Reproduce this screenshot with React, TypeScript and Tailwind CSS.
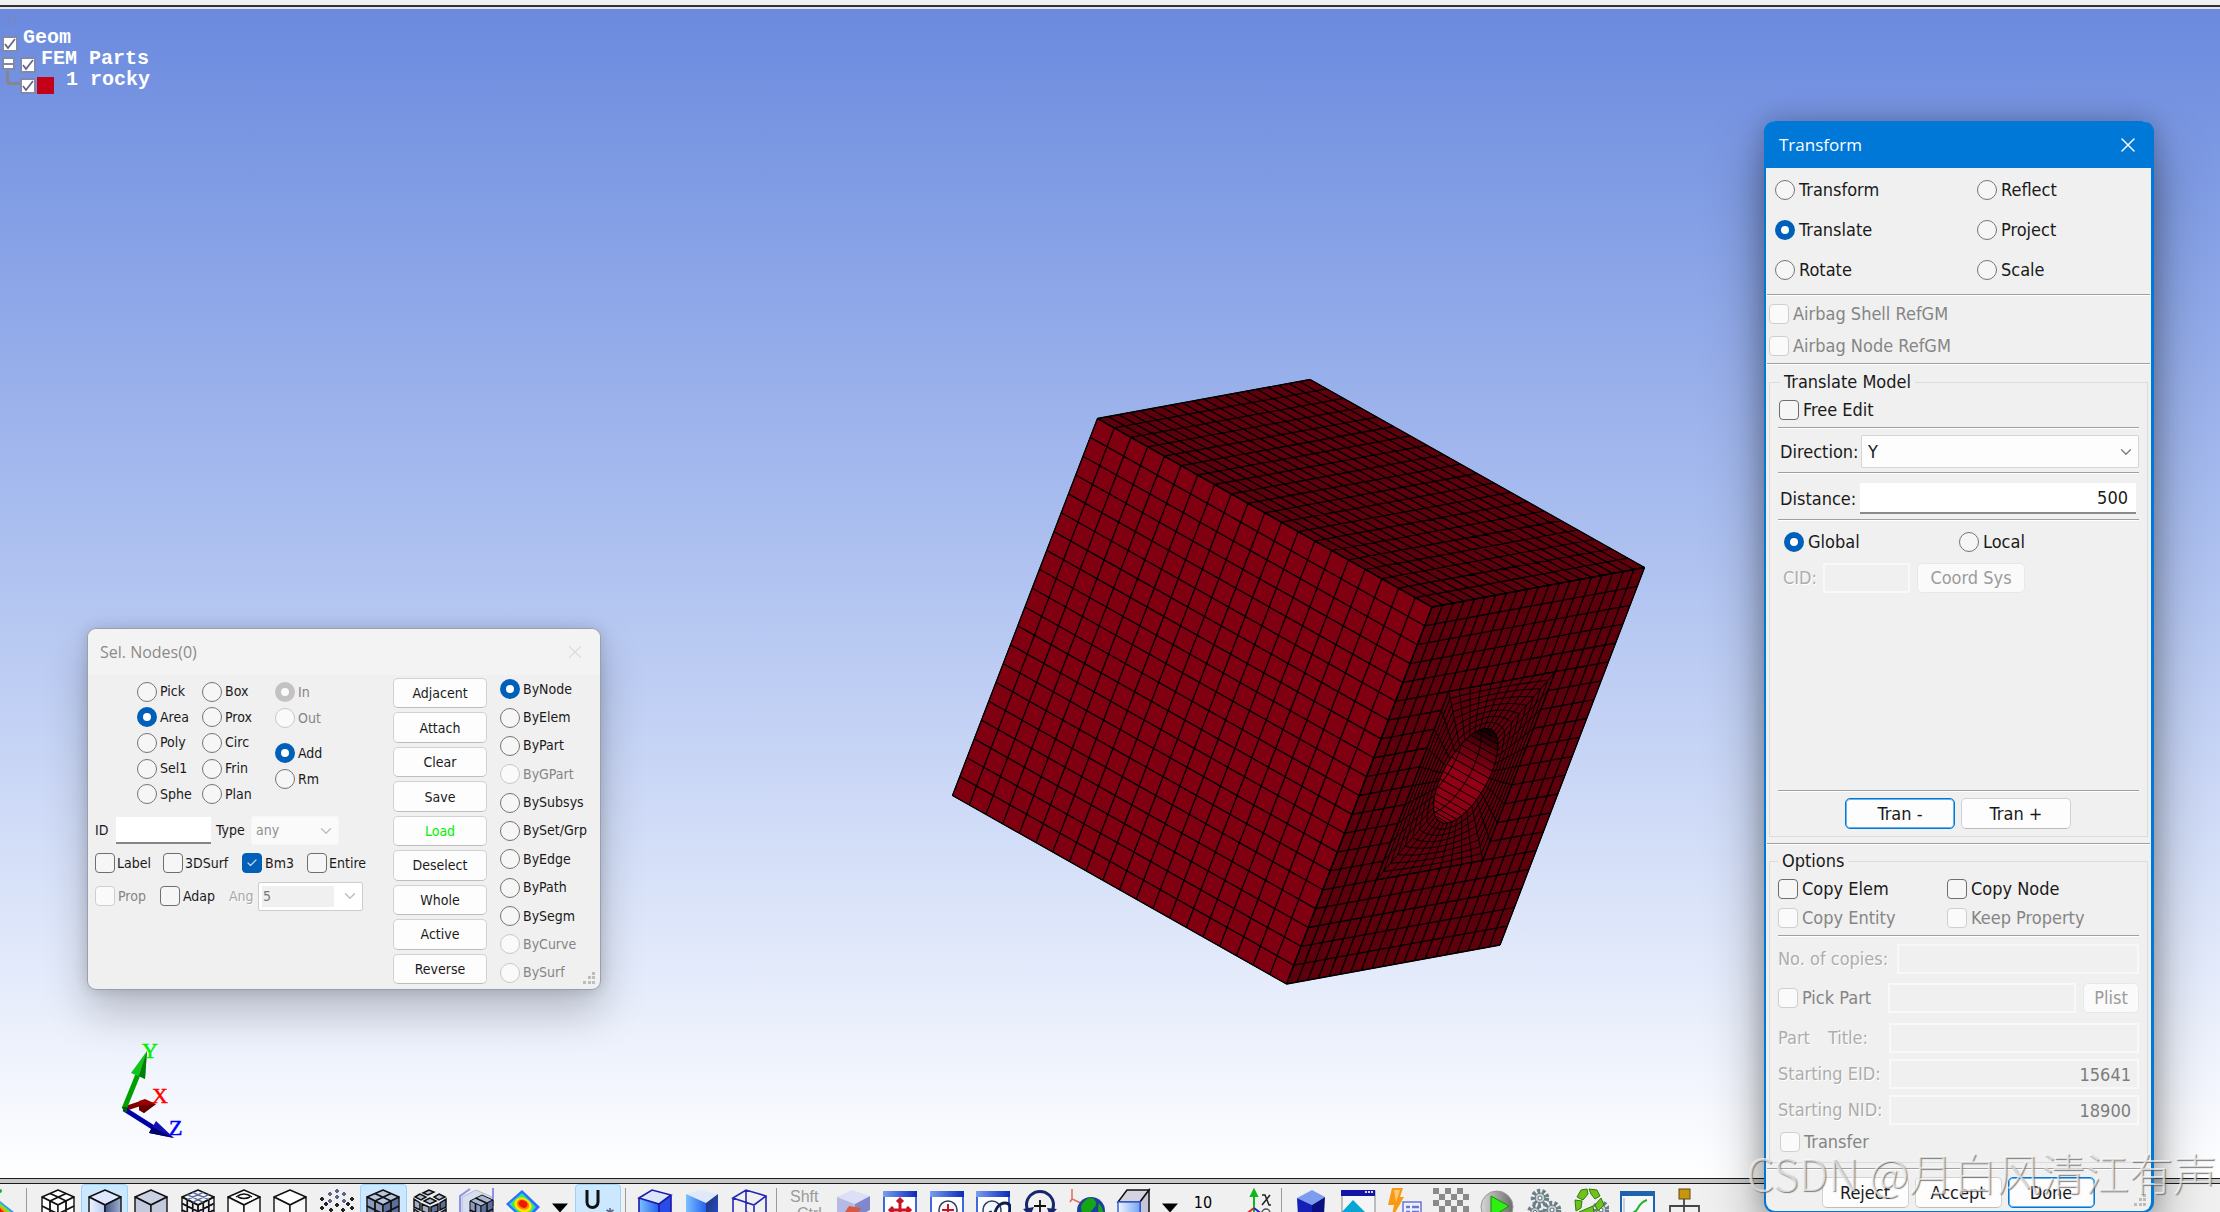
import React from "react";
import { Check, ChevronDown, ChevronsRight, X } from "lucide-react";
import clsx from "clsx";

type Pt = [number, number];

/* ---------- form primitives ---------- */

function Radio({ name, label, checked, disabled, gap = "gap-1" }: { name: string; label: string; checked?: boolean; disabled?: boolean; gap?: string }) {
  return (
    <label className={clsx("flex items-center whitespace-nowrap", gap, disabled && "text-[#858585]")}>
      <input
        type="radio"
        name={name}
        defaultChecked={checked}
        disabled={disabled}
        className="size-5 shrink-0 appearance-none rounded-full border border-[#757575] bg-[#f6f6f6] checked:border-[6px] checked:border-[#005fb8] checked:bg-white disabled:border-[#c8c8c8] disabled:bg-[#fafafa] disabled:checked:border-[#c2c2c2]"
      />
      <span>{label}</span>
    </label>
  );
}

function CheckBox({ label, checked, disabled, className }: { label: string; checked?: boolean; disabled?: boolean; className?: string }) {
  return (
    <label className={clsx("flex items-center whitespace-nowrap", disabled && "text-[#858585]", className)}>
      <span className="grid shrink-0 place-items-center">
        <input
          type="checkbox"
          defaultChecked={checked}
          disabled={disabled}
          className="peer col-start-1 row-start-1 size-5 appearance-none rounded-[4px] border border-[#6e6e6e] bg-[#f6f6f6] checked:border-[#005fb8] checked:bg-[#005fb8] disabled:border-[#cfcfcf] disabled:bg-[#fafafa]"
        />
        <Check className="pointer-events-none col-start-1 row-start-1 hidden size-3 text-[#bcd6ee] peer-checked:block" strokeWidth={2.5} />
      </span>
      <span>{label}</span>
    </label>
  );
}

function PushButton({ children, className, disabled, focus }: { children: React.ReactNode; className?: string; disabled?: boolean; focus?: boolean }) {
  return (
    <button
      type="button"
      disabled={disabled}
      className={clsx(
        "rounded-[5px] border",
        focus ? "border-[#0078d7] bg-[#fdfdfd] shadow-[0_0_0_1px_#6db3ea_inset]" : disabled ? "border-[#e8e8e8] bg-[#fafafa] text-[#9b9b9b]" : "border-[#d2d2d2] border-b-[#bdbdbd] bg-[#fdfdfd]",
        className,
      )}
    >
      {children}
    </button>
  );
}

function Select({ label, value, disabled, className, inner }: { label: string; value: string; disabled?: boolean; className?: string; inner?: string }) {
  return (
    <span className={clsx("grid items-center", className)}>
      <select aria-label={label} disabled={disabled} defaultValue={value} className={clsx("col-start-1 row-start-1 h-full w-full appearance-none rounded-[2px] border pr-7 opacity-100 outline-none", inner)}>
        <option>{value}</option>
      </select>
      <ChevronDown className={clsx("pointer-events-none col-start-1 row-start-1 mr-1 size-[18px] justify-self-end", disabled ? "text-[#bdbdbd]" : "text-[#7d7d7d]")} strokeWidth={1.8} />
    </span>
  );
}

function Rule({ className }: { className?: string }) {
  return <div className={clsx("h-[2px] border-t border-b border-t-[#a0a0a0] border-b-white", className)} />;
}

function Grip() {
  return (
    <svg className="pointer-events-none absolute right-1 bottom-1 size-[14px]" viewBox="0 0 14 14" fill="#bdbdbd">
      {[[10, 1], [10, 5], [10, 10], [6, 5], [6, 10], [1, 10]].map(([x, y]) => (
        <rect key={`${x}-${y}`} x={x} y={y} width="3" height="3" />
      ))}
    </svg>
  );
}

/* ---------- model tree ---------- */

function TreeCheck({ label }: { label: string }) {
  return (
    <span className="grid place-items-center self-end">
      <input type="checkbox" aria-label={label} defaultChecked className="col-start-1 row-start-1 size-4 appearance-none border-2 border-[#8088ab] bg-white" />
      <svg viewBox="0 0 16 16" className="pointer-events-none col-start-1 row-start-1 size-4" fill="none" stroke="#66668a" strokeWidth="1.8">
        <path d="M3 8l3 4 7-9" />
      </svg>
    </span>
  );
}

function ModelTree() {
  return (
    <div className="absolute top-0 left-0 font-['Liberation_Mono'] text-[20px] font-bold text-white">
      <ChevronsRight className="size-[22px] text-[#7787c6]" strokeWidth={1.8} />
      <div className="flex h-[21px] pl-[2px]">
        <TreeCheck label="Geom" />
        <span className="ml-[5px] leading-[14px]">Geom</span>
      </div>
      <div className="flex h-[21px] items-end pl-[2px]">
        <button type="button" aria-label="Collapse" className="mb-[3px] flex size-[13px] items-center border-2 border-[#8088ab] bg-white">
          <span className="h-[2px] w-full bg-[#8088ab]" />
        </button>
        <span className="ml-[5px] flex">
          <TreeCheck label="FEM Parts" />
        </span>
        <span className="ml-[5px] self-start leading-[14px]">FEM Parts</span>
      </div>
      <div className="flex h-[21px] items-end">
        <span className="mb-[9px] ml-[6px] h-[14px] w-[14px] rounded-bl border-b-[3px] border-l-[3px] border-[#85878d]" />
        <TreeCheck label="1 rocky" />
        <span className="ml-[1px] size-[17px] bg-[#c50019]" />
        <span className="ml-[12px] self-start leading-[14px]">1 rocky</span>
      </div>
    </div>
  );
}

/* ---------- finite element block ---------- */

const A: Pt = [145.5, 39.5];
const B: Pt = [358, 0.5];
const C: Pt = [692.5, 188.5];
const D: Pt = [480, 228];
const E: Pt = [0.5, 416.5];
const F: Pt = [334.5, 605];
const G: Pt = [548, 566];

const mix = (p: Pt, q: Pt, t: number): Pt => [p[0] + (q[0] - p[0]) * t, p[1] + (q[1] - p[1]) * t];
const quad = (p: Pt, q: Pt, r: Pt, s: Pt, u: number, v: number): Pt => mix(mix(p, q, u), mix(s, r, u), v);
const poly = (pts: Pt[]) => pts.map((p) => p[0].toFixed(1) + "," + p[1].toFixed(1)).join(" ");
const seg = (p: Pt, q: Pt) => `M${p[0].toFixed(1)} ${p[1].toFixed(1)}L${q[0].toFixed(1)} ${q[1].toFixed(1)}`;

function gridPath(p: Pt, q: Pt, r: Pt, s: Pt, n: number) {
  let d = "";
  for (let i = 0; i <= n; i++) {
    const t = i / n;
    d += seg(mix(p, q, t), mix(s, r, t)) + seg(mix(p, s, t), mix(q, r, t));
  }
  return d;
}

function squareEdge(i: number): Pt {
  const side = Math.floor(i / 10) % 4;
  const t = (i % 10) / 10;
  if (side === 0) return [0.25 + t / 2, 0.25];
  if (side === 1) return [0.75, 0.25 + t / 2];
  if (side === 2) return [0.75 - t / 2, 0.75];
  return [0.25, 0.75 - t / 2];
}

function circleEdge(i: number): Pt {
  const a = ((i / 40) * 360 - 135) * (Math.PI / 180);
  return [0.5 + 0.125 * Math.cos(a), 0.5 + 0.125 * Math.sin(a)];
}

const face = (p: Pt): Pt => quad(D, C, G, F, p[0], p[1]);

function BlockMesh() {
  let front = "";
  for (let i = 0; i <= 20; i++) {
    const t = i / 20;
    if (i > 5 && i < 15) {
      front += seg(face([t, 0]), face([t, 0.25])) + seg(face([t, 0.75]), face([t, 1]));
      front += seg(face([0, t]), face([0.25, t])) + seg(face([0.75, t]), face([1, t]));
    } else {
      front += seg(face([t, 0]), face([t, 1])) + seg(face([0, t]), face([1, t]));
    }
  }
  const idx = Array.from({ length: 40 }, (_, i) => i);
  let spokes = "";
  idx.forEach((i) => {
    spokes += seg(face(squareEdge(i)), face(circleEdge(i)));
  });
  const rings = [0, 1, 2, 3, 4, 5, 6, 7, 8].map((k) => poly(idx.map((i) => face(mix(circleEdge(i), squareEdge(i), k / 8)))));
  const hole = idx.map((i) => face(circleEdge(i)));
  const step: Pt = [(A[0] - D[0]) / 20, (A[1] - D[1]) / 20];
  let bore = "";
  hole.forEach((p) => {
    bore += seg(p, [p[0] + step[0] * 6, p[1] + step[1] * 6]);
  });
  return (
    <svg viewBox="0 0 694 606" className="absolute top-[370px] left-[952px] h-[606px] w-[694px]" stroke="#000" strokeWidth="1">
      <defs>
        <clipPath id="bore">
          <polygon points={poly(hole)} />
        </clipPath>
        <linearGradient id="wall" x1="0.7" y1="0" x2="0.4" y2="1">
          <stop offset="0" stopColor="#1c0004" />
          <stop offset="0.18" stopColor="#5c000d" />
          <stop offset="0.5" stopColor="#920016" />
          <stop offset="1" stopColor="#8c0014" />
        </linearGradient>
      </defs>
      <polygon points={poly([A, B, C, D])} fill="#5e000c" />
      <polygon points={poly([A, D, F, E])} fill="#800011" />
      <polygon points={poly([D, C, G, F])} fill="#5e000c" />
      <path d={gridPath(A, B, C, D, 20)} fill="none" strokeWidth="1.3" />
      <path d={gridPath(A, D, F, E, 20)} fill="none" strokeWidth="1.3" />
      <path d={front} fill="none" strokeWidth="1.3" />
      <path d={spokes} fill="none" />
      {rings.map((r, i) => (
        <polygon key={i} points={r} fill="none" />
      ))}
      <polygon points={poly(hole)} fill="url(#wall)" />
      <g clipPath="url(#bore)" fill="none">
        <path d={bore} />
        {[1, 2].map((k) => (
          <polygon key={k} points={poly(hole.map((p): Pt => [p[0] + step[0] * k, p[1] + step[1] * k]))} />
        ))}
      </g>
    </svg>
  );
}

function AxisTriad() {
  return (
    <svg viewBox="0 0 80 104" className="absolute top-[1031px] left-[112px] h-[104px] w-[80px] font-['Liberation_Serif'] text-[22px]">
      <path d="M12 69L30 63" stroke="#7c0000" strokeWidth="5" />
      <path d="M27 61l6-2 11 5-12 9-5-3z" fill="#990000" />
      <path d="M27 66l17-2-12 9-5-3z" fill="#640000" />
      <path d="M12 69L27 32" stroke="#00a000" strokeWidth="5" />
      <path d="M35 11L19 33l14 6z" fill="#12c41c" />
      <path d="M35 11L27 36l6 3z" fill="#067a0c" />
      <path d="M12 69L42 88" stroke="#0000a8" strokeWidth="5" />
      <path d="M62 98L44 81l-7 12z" fill="#1010b4" />
      <path d="M62 98L40 87l-3 6z" fill="#000070" />
      <path d="M10 67h5v5h-3z" fill="#006000" />
      <text x="30" y="18" fill="#00f000" stroke="#00f000" strokeWidth="0.5">Y</text>
      <text x="40" y="63" fill="#f00" stroke="#f00" strokeWidth="0.5">X</text>
      <text x="57" y="95" fill="#00f" stroke="#00f" strokeWidth="0.5">Z</text>
    </svg>
  );
}

/* ---------- node selection dialog ---------- */

const byModes: [string, boolean][] = [
  ["ByNode", false], ["ByElem", false], ["ByPart", false], ["ByGPart", true], ["BySubsys", false], ["BySet/Grp", false],
  ["ByEdge", false], ["ByPath", false], ["BySegm", false], ["ByCurve", true], ["BySurf", true],
];

function SelectNodesDialog() {
  return (
    <section className="absolute top-[628px] left-[87px] w-[514px] rounded-[9px] border border-[#9a9fae] bg-[#f0f0f0] text-[14px] text-[#1a1a1a] shadow-[0_22px_44px_rgba(0,0,0,0.22),0_0_14px_rgba(0,0,0,0.14)]">
      <header className="flex h-[46px] items-center justify-between rounded-t-[9px] bg-[#f3f3f3] pr-[14px] pl-[12px] font-['Open_Sans'] text-[16px] text-[#8b8b8b]">
        <h2>Sel. Nodes(0)</h2>
        <button type="button" aria-label="Close" className="text-[#dcdcdc]">
          <X className="size-[22px]" strokeWidth={1.2} />
        </button>
      </header>
      <div className="flex pb-[2px] pl-[7px]">
        <div className="w-[298px] pt-[4px]">
          <div className="flex pl-[42px]">
            <div className="grid h-[128px] w-[65px] auto-rows-fr">
              {["Pick", "Area", "Poly", "Sel1", "Sphe"].map((l) => <Radio key={l} name="shape" label={l} checked={l === "Area"} gap="gap-[3px]" />)}
            </div>
            <div className="grid h-[128px] w-[73px] auto-rows-fr">
              {["Box", "Prox", "Circ", "Frin", "Plan"].map((l) => <Radio key={l} name="shape" label={l} gap="gap-[3px]" />)}
            </div>
            <div className="grid auto-rows-[26px] content-start">
              <Radio name="side" label="In" checked disabled gap="gap-[3px]" />
              <Radio name="side" label="Out" disabled gap="gap-[3px]" />
              <div className="mt-[9px] grid auto-rows-[26px]">
                <Radio name="op" label="Add" checked gap="gap-[3px]" />
                <Radio name="op" label="Rm" gap="gap-[3px]" />
              </div>
            </div>
          </div>
          <div className="mt-[9px] flex h-[29px] items-center">
            <label htmlFor="node-id" className="w-[21px]">ID</label>
            <input id="node-id" className="h-[27px] w-[95px] border-b-2 border-[#868686] bg-white px-1 outline-none" />
            <span className="ml-[5px] w-[35px]">Type</span>
            <Select label="Type" value="any" disabled className="h-[29px] w-[88px]" inner="border-[#f6f6f6] bg-[#fafafa] pl-1 text-[#8f8f8f]" />
          </div>
          <div className="mt-[2px] flex h-[32px] items-center">
            <CheckBox label="Label" className="w-[68px] gap-[2px]" />
            <CheckBox label="3DSurf" className="w-[79px] gap-[2px]" />
            <CheckBox label="Bm3" checked className="w-[65px] gap-[3px]" />
            <CheckBox label="Entire" className="gap-[2px]" />
          </div>
          <div className="flex h-[34px] items-center">
            <CheckBox label="Prop" disabled className="w-[65px] gap-[3px]" />
            <CheckBox label="Adap" className="w-[69px] gap-[3px]" />
            <span className="w-[29px] text-[#a8a8a8] [text-shadow:1px_1px_0_#fff]">Ang</span>
            <Select label="Ang" value="5" disabled className="h-[29px] w-[105px]" inner="border-[#cdcdcd] bg-[linear-gradient(#f0f0f0,#f0f0f0)] bg-[length:72px_21px] bg-[position:3px_3px] bg-no-repeat bg-white pl-1 text-[#777]" />
          </div>
        </div>
        <div className="grid h-[309px] w-[94px] auto-rows-fr gap-1 pt-[3px]">
          {["Adjacent", "Attach", "Clear", "Save", "Load", "Deselect", "Whole", "Active", "Reverse"].map((l) => (
            <PushButton key={l} className={clsx("leading-none", l === "Load" && "text-[#00f000]")}>{l}</PushButton>
          ))}
        </div>
        <div className="ml-[13px] grid h-[312px] auto-rows-fr">
          {byModes.map(([l, off]) => <Radio key={l} name="by" label={l} checked={l === "ByNode"} disabled={off} gap="gap-[3px]" />)}
        </div>
      </div>
      <Grip />
    </section>
  );
}

/* ---------- transform dialog ---------- */

const flatField = "h-[30px] min-w-0 border-2 border-[#f8f8f8] bg-[#f0f0f0] px-1.5 text-right text-[#7d7d7d] outline-none";
const etched = "whitespace-nowrap text-[#adadad] [text-shadow:1px_1px_0_#fff]";

function TransformDialog() {
  return (
    <section className="absolute top-[121px] right-[66px] z-10 w-[390px] rounded-[11px] border-r-[3px] border-b-2 border-l-2 border-[#0078d7] bg-[#f0f0f0] text-[18px] leading-6 text-[#1a1a1a] shadow-[0_28px_56px_rgba(0,0,0,0.36),0_0_24px_rgba(0,0,0,0.22)]">
      <header className="-mx-[1px] flex h-[47px] items-center justify-between rounded-t-[10px] bg-[#0078d7] pr-[12px] pl-[14px] font-['Open_Sans'] text-[17px] text-white">
        <h2>Transform</h2>
        <button type="button" aria-label="Close">
          <X className="size-6" strokeWidth={1.4} />
        </button>
      </header>
      <div className="grid auto-rows-[40px] grid-cols-[202px_1fr] pt-[2px] pl-[9px]">
        {["Transform", "Reflect", "Translate", "Project", "Rotate", "Scale"].map((l) => <Radio key={l} name="kind" label={l} checked={l === "Translate"} />)}
      </div>
      <Rule className="mx-px mt-1" />
      <div className="mt-[2px] grid auto-rows-[32px] pl-[3px]">
        <CheckBox label="Airbag Shell RefGM" disabled className="gap-1" />
        <CheckBox label="Airbag Node RefGM" disabled className="gap-1" />
      </div>
      <Rule className="mx-px mt-px" />

      <fieldset className="mx-[3px] mt-[5px] min-w-0 border border-[#dcdcdc] px-2 pb-[7px]">
        <legend className="ml-[2px] px-[4px] leading-6">Translate Model</legend>
        <CheckBox label="Free Edit" className="h-8 gap-1 pl-px" />
        <Rule className="mt-px" />
        <div className="mt-[6px] flex h-[33px] items-center pl-[2px]">
          <span className="w-[81px]">Direction:</span>
          <Select label="Direction" value="Y" className="h-[33px] flex-1" inner="border-[#d5d5d5] bg-[#fdfdfd] pl-1.5" />
        </div>
        <Rule className="mt-1" />
        <div className="mt-[9px] flex h-[31px] items-center pr-[3px] pl-[2px]">
          <label htmlFor="distance" className="w-[80px]">Distance:</label>
          <input id="distance" defaultValue="500" className="h-[31px] min-w-0 flex-1 border-b-2 border-[#8b8b8b] bg-white px-2 text-right outline-none" />
        </div>
        <Rule className="mt-[5px]" />
        <div className="mt-1 grid h-[34px] grid-cols-[175px_1fr] pl-[6px]">
          <Radio name="frame" label="Global" checked />
          <Radio name="frame" label="Local" />
        </div>
        <div className="mt-[3px] flex h-[31px] items-center pl-[5px]">
          <label htmlFor="cid" className={clsx("w-[40px]", etched)}>CID:</label>
          <input id="cid" disabled className={clsx(flatField, "w-[87px]")} />
          <PushButton disabled className="ml-[7px] h-[30px] w-[108px]">Coord Sys</PushButton>
        </div>
        <Rule className="mt-[197px]" />
        <div className="mt-[6px] flex justify-center gap-[6px] pr-px">
          <PushButton focus className="h-[31px] w-[110px]">Tran -</PushButton>
          <PushButton className="h-[31px] w-[110px]">Tran +</PushButton>
        </div>
      </fieldset>
      <Rule className="mx-px mt-[6px]" />

      <fieldset className="mx-[3px] mt-1 min-w-0 border border-[#dcdcdc] px-2 pb-[5px]">
        <legend className="px-[4px] leading-6">Options</legend>
        <div className="mt-px grid auto-rows-[29px] grid-cols-[169px_1fr]">
          <CheckBox label="Copy Elem" className="gap-1" />
          <CheckBox label="Copy Node" className="gap-1" />
          <CheckBox label="Copy Entity" disabled className="gap-1" />
          <CheckBox label="Keep Property" disabled className="gap-1" />
        </div>
        <Rule className="mt-[3px]" />
        <div className="mt-[7px] flex items-center">
          <label htmlFor="copies" className={clsx("w-[119px]", etched)}>No. of copies:</label>
          <input id="copies" disabled className={clsx(flatField, "flex-1")} />
        </div>
        <div className="mt-[9px] flex items-center">
          <CheckBox label="Pick Part" disabled className="w-[110px] gap-1" />
          <input aria-label="Part" disabled className={clsx(flatField, "flex-1")} />
          <PushButton disabled className="ml-[7px] h-[30px] w-[56px]">Plist</PushButton>
        </div>
        <div className="mt-[10px] flex items-center">
          <label htmlFor="title" className={clsx("flex w-[111px] gap-[18px]", etched)}><span>Part</span><span>Title:</span></label>
          <input id="title" disabled className={clsx(flatField, "flex-1")} />
        </div>
        <div className="mt-[6px] flex items-center">
          <label htmlFor="eid" className={clsx("w-[111px]", etched)}>Starting EID:</label>
          <input id="eid" disabled defaultValue="15641" className={clsx(flatField, "flex-1")} />
        </div>
        <div className="mt-[6px] flex items-center">
          <label htmlFor="nid" className={clsx("w-[111px]", etched)}>Starting NID:</label>
          <input id="nid" disabled defaultValue="18900" className={clsx(flatField, "flex-1")} />
        </div>
        <CheckBox label="Transfer" disabled className="mt-[2px] h-[30px] gap-1 pl-[2px]" />
      </fieldset>
      <Rule className="mx-px mt-[5px]" />
      <div className="mt-[7px] flex justify-center gap-[6px] pr-px pb-[3px]">
        <PushButton className="h-[31px] w-[87px]">Reject</PushButton>
        <PushButton className="h-[31px] w-[87px]">Accept</PushButton>
        <PushButton focus className="h-[31px] w-[87px]">Done</PushButton>
      </div>
      <Grip />
    </section>
  );
}

/* ---------- toolbar ---------- */

function Cube({ top = "none", left = "none", right = "none", stroke = "#111", children }: { top?: string; left?: string; right?: string; stroke?: string; children?: React.ReactNode }) {
  return (
    <g strokeLinejoin="round" stroke={stroke} strokeWidth="1.4" fill="none">
      <path d="M18 2L34 9 18 17 2 9z" fill={top} />
      <path d="M2 9L18 17V36L2 29z" fill={left} />
      <path d="M34 9L18 17V36l16-7z" fill={right} />
      {children}
    </g>
  );
}

const cubeGrid = "M12.7 4.3l16 7.4M7.3 6.7l16 7.6M23.3 4.3l-16 7.4M28.7 6.7l-16 7.6M7.3 12v20M12.7 14.5v20M28.7 12v20M23.3 14.5v20M2 15.5l16 8 16-8M2 22l16 8 16-8";

function WindowFrame({ children }: { children: React.ReactNode }) {
  return (
    <g>
      <rect x="2" y="4" width="32" height="32" fill="#fff" stroke="#3f6ad8" strokeWidth="2" />
      <rect x="1" y="3" width="34" height="6" fill="url(#bar)" />
      {children}
    </g>
  );
}

function Gear({ x, y, r }: { x: number; y: number; r: number }) {
  return (
    <g>
      <circle cx={x} cy={y} r={r} fill="none" stroke="#6b7f86" strokeWidth={r * 0.65} strokeDasharray="3 2" />
      <circle cx={x} cy={y} r={r * 0.7} fill="#c3d2d6" stroke="#5e7077" />
      <circle cx={x} cy={y} r={r * 0.28} fill="#fff" stroke="#5e7077" />
    </g>
  );
}

const Contour = () => (
  <g>
    <path d="M17 2L35 19 20 34 1 16z" fill="#2d6bff" />
    <path d="M17 5L31 19 20 31 4 16z" fill="#19e0c8" />
    <path d="M17 7L29 19 20 29 6 16z" fill="#5be81a" />
    <ellipse cx="18" cy="17" rx="9" ry="7" fill="#ffe600" transform="rotate(25 18 17)" />
    <ellipse cx="18" cy="16.5" rx="6.5" ry="5" fill="#ff8a00" transform="rotate(25 18 16.5)" />
    <ellipse cx="18" cy="16" rx="4.5" ry="3.5" fill="#f01800" transform="rotate(25 18 16)" />
  </g>
);

const viewIcons: [string, React.ReactNode, boolean?][] = [
  ["Mesh wire", <Cube key="i" top="#fff" left="#fff" right="#fff"><path d="M10 5.500l8 3.500 8 4M26 5.500L10 13M10 13v20M26 13v20M2 18l16 8 16-8" strokeWidth="1.800" /></Cube>],
  ["Shaded", <Cube key="i" top="#dfe8ff" left="url(#pale)" right="url(#slate)" />, true],
  ["Hidden", <Cube key="i" top="#c9d1e2" left="#c2cadc" right="#c2cadc" />],
  ["Wireframe", <Cube key="i" top="#f4f6fb"><path d={cubeGrid} stroke="#5b6c99" /><path d="M2 15.500l16 8 16-8M2 22l16 8 16-8M7.300 12v20M12.700 14.500v20M28.700 12v20M23.300 14.500v20" strokeWidth="1.600" /></Cube>],
  ["Feature", <Cube key="i" top="#fff" left="#f8f8f8" right="#f8f8f8"><path d="M10 9q8-6 16 0M12 9q6 3 12 0" /></Cube>],
  ["Outline", <Cube key="i" top="#fff" left="#f8f8f8" right="#f8f8f8" />],
  ["Points", (
    <g key="i" strokeWidth="2">
      {[[18, 3], [11, 6], [25, 6], [18, 9], [3, 11], [11, 13], [25, 13], [33, 11], [7, 16], [18, 17], [29, 16], [3, 20], [33, 20], [12, 22], [24, 22], [18, 26]].map(([x, y], k) => (
        <path key={k} d={`M${x - 2} ${y}h4M${x} ${y - 2}v4`} stroke={k < 7 && k !== 4 ? "#59668c" : "#222"} />
      ))}
    </g>
  )],
  ["Edges", <Cube key="i" top="#b9c5dd" left="#8a9bbd" right="#5a6f9c"><path d="M10 5.500l16 7.500M26 5.500L10 13M10 13v20M26 13v20M2 18l16 8 16-8" strokeWidth="1.800" /></Cube>, true],
  ["Shrink", (
    <g key="i">
      <path d="M18 2L34 9v20l-16 7-16-7V9z" fill="#eef0f4" />
      <path d="M17 2l-6 3 5 2 6-3zM8 6L3 9l6 3 5-3zM27 6l6 3-6 3-5-3zM18 10l-6 3 6 3 6-3z" fill="#b4c0d8" stroke="#111" strokeWidth="1.500" />
      <path d="M2 11l6 4v7l-6-3zM10 16l7 3v7l-7-3zM2 21l6 4v7l-6-3zM10 26l7 3v7l-7-3z" fill="#a3afc8" stroke="#111" strokeWidth="1.500" />
      <path d="M34 11l-6 4v7l6-3zM26 16l-7 3v7l7-3zM34 21l-6 4v7l6-3zM26 26l-7 3v7l7-3z" fill="#5a6f9c" stroke="#111" strokeWidth="1.500" />
    </g>
  )],
  ["Section", <g key="i"><path d="M2 36V8L12 1M35 0v18" stroke="#8f8ff0" strokeWidth="2" fill="none" /><path d="M4 9L18 2l16 7-14 8v19L4 29z" fill="#d7def0" stroke="#b5b9c8" /><path d="M12 13l12-6 11 5-12 6z" fill="#a9b6d1" stroke="#111" /><path d="M12 13l11 5v18H12z" fill="#8a9bbd" stroke="#111" /><path d="M35 12l-12 6v18h12z" fill="#5a6f9c" stroke="#111" /><path d="M17.500 10l11 5M17.500 15v20M29 15v20M12 22l11 5 12-6" stroke="#111" strokeWidth="1.600" fill="none" /></g>],
  ["Fringe", <Contour key="i" />],
];

const solidIcons: [string, React.ReactNode][] = [
  ["Edge solid", <g key="i"><path d="M2 10L15 2 34 7 22 16z" fill="#dbe6fb" /><path d="M2 10l20 6v20L2 32z" fill="url(#azure)" /><path d="M34 7L22 16v20l12-8z" fill="#2a4be6" /><path d="M2 10L15 2l19 5-12 9zM22 16v20M2 10v26M34 7v29" fill="none" stroke="#1a1aa8" strokeWidth="1.600" /></g>],
  ["Solid", <g key="i"><path d="M2 6L16 2l18 4-12 9z" fill="#dfe9fa" /><path d="M2 6l20 9v21L2 32z" fill="url(#azure)" /><path d="M34 6L22 15v21l12-8z" fill="url(#navy)" /></g>],
  ["Wire", <path key="i" d="M2 10L15 2l20 6-12 9zM2 10v26M23 17v19M35 8v28M15 2v22L2 34M15 24l20 6" fill="none" stroke="#2727b5" strokeWidth="1.600" />],
];

const navIcons: [string, React.ReactNode][] = [
  ["Modifier keys", <g key="i" fill="#9a9a9a" className="font-['Liberation_Sans'] text-[16px]"><text x="2" y="14">Shft</text><text x="9" y="31">Ctrl</text></g>],
  ["Pick face", <g key="i"><path d="M2 9L17 2l18 6-15 8z" fill="#dcdff5" /><path d="M2 9l18 7v14L2 24z" fill="#b5bae4" /><path d="M35 8L20 16v14l15-8z" fill="#8088cc" /><path d="M6 30l8-12 12 2-10 16z" fill="#d95843" /></g>],
  ["Pan", <WindowFrame key="i"><path d="M18 11v22M8 22h20M15 14l3-3 3 3M11 19l-3 3 3 3M25 19l3 3-3 3" stroke="#c81424" strokeWidth="3" fill="none" /></WindowFrame>],
  ["Zoom in", <WindowFrame key="i"><circle cx="19" cy="22" r="9" fill="#f4f9ff" stroke="#31415f" strokeWidth="1.500" /><path d="M19 16v12M13 22h12" stroke="#d01020" strokeWidth="2" /></WindowFrame>],
  ["Zoom rotate", <WindowFrame key="i"><circle cx="17" cy="22" r="9" fill="#f4f9ff" stroke="#31415f" strokeWidth="1.500" /><path d="M19 30c1-9 5-15 11-15 7 0 7 9 1 13M15 23l4 9 7-6" fill="none" stroke="#10204c" strokeWidth="3" /></WindowFrame>],
  ["Rotate", <g key="i"><path d="M8 26A13.500 13.500 0 1 1 28 26" fill="none" stroke="#15266e" strokeWidth="3" /><path d="M1 21l11-2-4 9zM35 21l-10-1 3 8z" fill="#15266e" /><path d="M18 12v12M12 18h12" stroke="#111" strokeWidth="1.800" /></g>],
  ["Globe", <g key="i"><path d="M3 1v10l11 5M3 11l-2 3" stroke="#e06a60" strokeWidth="1.500" fill="none" /><circle cx="22" cy="23" r="14" fill="#1c3f9c" /><path d="M12 18q6-11 13-7 5 5-1 10t-3 15q-9-8-9-18zM30 15q6 7 4 15-7-4-4-15z" fill="#15a515" /></g>],
  ["Box view", <g key="i"><path d="M2 14L11 2h22L24 14z" fill="#d4d2e0" stroke="#111" strokeWidth="1.500" /><path d="M33 2v22l-9 12V14z" fill="#c6c4d6" stroke="#111" strokeWidth="1.500" /><path d="M2 14h22v22H2z" fill="url(#azure2)" stroke="#3a5fd8" strokeWidth="1.500" /></g>],
];

const appIcons: [string, React.ReactNode][] = [
  ["Model", <g key="i"><path d="M4 10L19 2l13 7-13 8z" fill="#7d9cf0" /><path d="M4 10l15 7v19L5 28z" fill="#1620b4" /><path d="M32 9L19 17v19l12-9z" fill="#0a1080" /></g>],
  ["Home", <g key="i"><rect x="2" y="3" width="33" height="34" fill="#f5f5f5" stroke="#888" /><rect x="1" y="2" width="34" height="6" fill="#1414a8" /><path d="M25 4h2M28 4h2M31 4h2" stroke="#ddd" strokeWidth="2" /><path d="M13 12L26 25H22V36H5V25H1z" fill="#06a5d6" /></g>],
  ["Keyword", <g key="i"><path d="M6 0h11l-3 9h4L5 32l3-15H2z" fill="#f99a16" /><path d="M8 2h6l-4 12" fill="#ffc878" /><rect x="17" y="14" width="18" height="22" fill="#edf1ff" stroke="#6a76cf" strokeWidth="1.500" /><path d="M20 19h4M20 24h4M26 19h7M26 24h7" stroke="#6a76cf" strokeWidth="2.500" /></g>],
  ["Checker", <g key="i" fill="#8a8a8a">{[0, 1, 2, 3, 4, 5].flatMap((r) => [0, 1, 2, 3, 4, 5].filter((c) => (r + c) % 2 === 0).map((c) => <rect key={`${r}-${c}`} x={c * 6} y={r * 6} width="6" height="6" />))}</g>],
  ["Run", <g key="i"><circle cx="17" cy="19" r="16" fill="url(#steel)" stroke="#999" /><path d="M11 8l18 10-18 12z" fill="#2bf010" stroke="#1b8a10" /></g>],
  ["Settings", <g key="i"><Gear x={14} y={10} r={7} /><Gear x={26} y={22} r={7} /><Gear x={9} y={24} r={6} /></g>],
  ["Recycle", <g key="i"><Gear x={28} y={22} r={7} /><path d="M16 1l8 1 3 6-5 3-4-5zM14 1L8 2 4 9l6 3 5-6zM2 12l7 1-1 7-5 3zM28 10l3 7-6 6-3-6zM6 24l14-6 1 6-7 6z" fill="#6fc21c" stroke="#2f7a0c" /></g>],
  ["Plot", <g key="i"><rect x="2" y="4" width="33" height="32" fill="#f4f8fb" stroke="#1f62ad" strokeWidth="2" /><rect x="1" y="3" width="35" height="5" fill="#1f62ad" /><path d="M5 10v24" stroke="#9ab" /><path d="M8 26q8 0 11-6t9-8" stroke="#30b030" strokeWidth="2" fill="none" /></g>],
  ["Hierarchy", <g key="i"><rect x="13" y="1" width="11" height="10" fill="#c8960c" stroke="#5c4a10" /><path d="M18 11v6M4 24v-6h29v6M18 17v7" stroke="#444" strokeWidth="1.800" fill="none" /><path d="M1 24h8v8H1zM14 24h9v8h-9zM28 24h8v8h-8z" fill="#c8960c" /></g>],
];

function Tool({ label, active, children }: { label: string; active?: boolean; children: React.ReactNode }) {
  return (
    <button type="button" aria-label={label} className={clsx("flex h-[46px] flex-1 justify-center rounded-[4px] border pt-[3px]", active ? "border-[#99d1ff] bg-[#cce8ff]" : "border-transparent")}>
      <svg viewBox="0 0 36 36" className="size-9 shrink-0">{children}</svg>
    </button>
  );
}

const Divider = ({ className }: { className?: string }) => <span className={clsx("mt-1 h-10 w-px bg-[#9a9a9a]", className)} />;

function Caret({ label, className }: { label: string; className?: string }) {
  return (
    <button type="button" aria-label={label} className={clsx("flex justify-center pt-[19px]", className)}>
      <svg viewBox="0 0 16 9" className="h-[10px] w-[16px]"><path d="M0 0h16L8 9z" /></svg>
    </button>
  );
}

function Toolbar() {
  return (
    <div className="flex h-7 items-start overflow-hidden bg-[#f0f0f0]">
      <svg viewBox="0 0 14 28" className="h-7 w-[14px] shrink-0">
        <path d="M0 17L14 28H0z" fill="#2d9bff" /><path d="M0 19l11 9H0z" fill="#7be02a" /><path d="M0 22l7 6H0z" fill="#ff9a00" /><path d="M0 24l4 4H0z" fill="#f01800" /><circle cx="0" cy="7" r="2" fill="#18b020" />
      </svg>
      <Divider className="ml-[12px]" />
      <div className="ml-[8px] flex w-[511px]">
        {viewIcons.map(([l, g, on]) => <Tool key={l} label={l} active={on}>{g}</Tool>)}
      </div>
      <Caret label="Fringe options" className="w-[28px]" />
      <div className="ml-px flex w-[46px]">
        <Tool label="Unreferenced" active>
          <path d="M7 2v12a5.500 5.500 0 0 0 11 0V2" fill="none" stroke="#111" strokeWidth="3" />
          <path d="M30 20v8M26.500 22l7 4M33.500 22l-7 4" stroke="#555a80" strokeWidth="1.500" />
        </Tool>
      </div>
      <Divider className="ml-[4px]" />
      <div className="ml-[6px] flex w-[140px]">{solidIcons.map(([l, g]) => <Tool key={l} label={l}>{g}</Tool>)}</div>
      <Divider className="ml-[4px]" />
      <div className="ml-[6px] flex w-[374px]">{navIcons.map(([l, g]) => <Tool key={l} label={l}>{g}</Tool>)}</div>
      <Caret label="View options" className="w-[26px]" />
      <button type="button" className="w-[40px] pt-[7px] text-[16px] leading-6">10</button>
      <div className="ml-[14px] flex w-[44px]">
        <Tool label="Triad">
          <path d="M13 30V5M10 8l3-6 3 6z" stroke="#10b818" strokeWidth="2" fill="#10b818" />
          <path d="M13 20l-9 7" stroke="#e02020" strokeWidth="2" /><path d="M13 20l9 7" stroke="#2020e0" strokeWidth="2" />
          <path d="M21 7h3l4 10h2M29 7l-8 10" stroke="#222" strokeWidth="1.500" fill="none" /><circle cx="25" cy="25" r="4" fill="none" stroke="#555" strokeWidth="1.500" />
        </Tool>
      </div>
      <Divider />
      <div className="ml-[6px] flex w-[419px]">{appIcons.map(([l, g]) => <Tool key={l} label={l}>{g}</Tool>)}</div>
    </div>
  );
}

export default function App() {
  return (
    <main className="relative flex h-screen flex-col overflow-hidden bg-[#f0f0f0] font-['DejaVu_Sans_Condensed','Noto_Sans',sans-serif]">
      <svg className="absolute size-0" aria-hidden="true">
        <defs>
          <linearGradient id="bar"><stop offset="0" stopColor="#7aa0f0" /><stop offset="1" stopColor="#0c28b8" /></linearGradient>
          <linearGradient id="pale"><stop offset="0" stopColor="#eef3ff" /><stop offset="1" stopColor="#b9c9ee" /></linearGradient>
          <linearGradient id="slate"><stop offset="0" stopColor="#3f5584" /><stop offset="1" stopColor="#9fb0d2" /></linearGradient>
          <linearGradient id="azure"><stop offset="0" stopColor="#7cc0ff" /><stop offset="1" stopColor="#2461ee" /></linearGradient>
          <linearGradient id="azure2"><stop offset="0" stopColor="#f0f6ff" /><stop offset="1" stopColor="#74a4f4" /></linearGradient>
          <linearGradient id="navy" x1="0" y1="0" x2="1" y2="1"><stop offset="0" stopColor="#20336e" /><stop offset="1" stopColor="#2a50d8" /></linearGradient>
          <linearGradient id="steel"><stop offset="0" stopColor="#d8d8d8" /><stop offset="1" stopColor="#6c6c6c" /></linearGradient>
        </defs>
      </svg>
      <div className="h-[9px] border-t-[5px] border-b-2 border-t-[#f0f0f0] border-b-[#dfe6e4] bg-[#30343a]" />
      <div className="relative min-h-0 flex-1 bg-linear-to-b from-[#6b8ade] to-white">
        <ModelTree />
        <BlockMesh />
        <AxisTriad />
      </div>
      <div className="h-[6px] border-y border-[#1c1c1c] bg-[#c9c9c9]" />
      <Toolbar />
      <SelectNodesDialog />
      <TransformDialog />
      <p className="pointer-events-none absolute right-[3px] bottom-[10px] z-20 font-['Noto_Sans_CJK_SC',sans-serif] text-[44px] leading-[60px] font-light whitespace-nowrap text-white/65 [text-shadow:1px_1px_1px_rgba(90,90,90,0.75)]">CSDN @月白风清江有声</p>
    </main>
  );
}
